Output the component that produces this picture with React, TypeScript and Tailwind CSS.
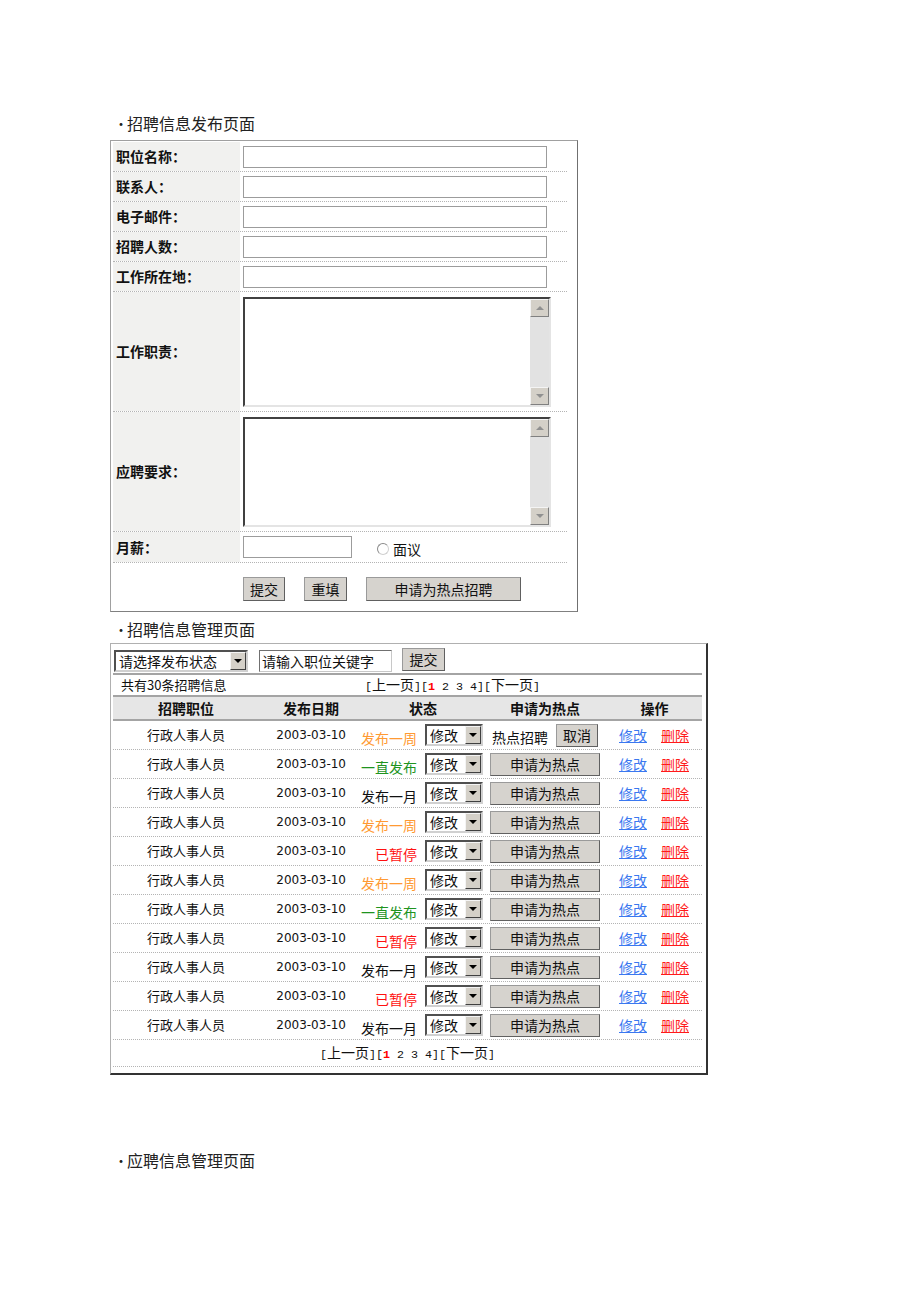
import React from 'react';

const Heading = ({ children }: { children: React.ReactNode }) => (
  <div className="h-[20px] leading-[20px] flex items-center text-[16px] text-[#222]">
    <span className="w-[17px] pl-[4px] text-[14px]">•</span>
    <span>{children}</span>
  </div>
);

const Btn = ({ children, className }: { children: React.ReactNode; className: string }) => (
  <div
    className={`flex items-center justify-center bg-[#d6d3ce] border border-[#9a9a9a] border-r-[#606060] border-b-[#606060] text-[14px] text-[#111] ${className}`}
  >
    {children}
  </div>
);

const Select = ({ text, className }: { text: string; className: string }) => (
  <div
    className={`h-[22px] flex bg-white border-2 border-t-[#505050] border-l-[#505050] border-r-[#d0d0d0] border-b-[#d0d0d0] ${className}`}
  >
    <div className="flex-1 flex items-center pl-[3px] text-[14px] leading-[18px] whitespace-nowrap">{text}</div>
    <div className="w-[16px] bg-[#d4d0c8] border border-t-[#f4f4f4] border-l-[#f4f4f4] border-r-[#404040] border-b-[#404040] flex items-center justify-center">
      <div className="w-0 h-0 border-l-[4px] border-r-[4px] border-t-[4px] border-l-transparent border-r-transparent border-t-black" />
    </div>
  </div>
);

const ScrollBtn = ({ up }: { up?: boolean }) => (
  <div className="h-[18px] bg-[#d4d0c8] border border-t-[#f4f4f4] border-l-[#f4f4f4] border-r-[#808080] border-b-[#808080] flex items-center justify-center">
    {up ? (
      <div className="w-0 h-0 border-l-[4px] border-r-[4px] border-b-[4px] border-l-transparent border-r-transparent border-b-[#909090]" />
    ) : (
      <div className="w-0 h-0 border-l-[4px] border-r-[4px] border-t-[4px] border-l-transparent border-r-transparent border-t-[#909090]" />
    )}
  </div>
);

const TextArea = () => (
  <div className="w-[308px] h-[110px] flex bg-white border-2 border-t-[#404040] border-l-[#404040] border-r-[#e4e4e4] border-b-[#e4e4e4]">
    <div className="flex-1" />
    <div className="w-[19px] flex flex-col bg-[#e2e2e2]">
      <ScrollBtn up />
      <div className="flex-1" />
      <ScrollBtn />
    </div>
  </div>
);

const Field = ({ w }: { w: string }) => <div className={`h-[22px] bg-white border border-[#9c9c9c] ${w}`} />;

const FormRow = ({ label, h, children }: { label: string; h: string; children: React.ReactNode }) => (
  <div className={`flex border-b border-dotted border-[#b4b4b4] ${h}`}>
    <div className="w-[127px] shrink-0 bg-[#f1f1ef] flex items-center pl-[3px] text-[14px] font-bold">{label}</div>
    <div className="flex items-center pl-[3px]">{children}</div>
  </div>
);

const Mono = ({ children }: { children: React.ReactNode }) => (
  <span className="font-['Liberation_Mono',monospace] text-[11.67px]">{children}</span>
);

const Pager = () => (
  <span className="text-[14px] whitespace-nowrap">
    <Mono>[</Mono>上一页<Mono>][</Mono>
    <span className="font-['Liberation_Mono',monospace] text-[11.67px] font-bold text-[#ff0000]">1</span>
    <Mono> 2 3 4][</Mono>下一页<Mono>]</Mono>
  </span>
);

type Status = { text: string; color: string };
const S1: Status = { text: '发布一周', color: 'text-[#ff9a33]' };
const S2: Status = { text: '一直发布', color: 'text-[#1f941f]' };
const S3: Status = { text: '发布一月', color: 'text-[#111]' };
const S4: Status = { text: '已暂停', color: 'text-[#ff1010]' };

const rows: Status[] = [S1, S2, S3, S1, S4, S1, S2, S4, S3, S4, S3];

const PublishForm = () => (
  <div className="w-[468px] h-[472px] border border-[#a0a0a0] border-r-[#707070] border-b-[#808080] pt-[1px] pl-[2px]">
    <div className="w-[454px]">
      <FormRow label="职位名称：" h="h-[30px]"><Field w="w-[304px]" /></FormRow>
      <FormRow label="联系人：" h="h-[30px]"><Field w="w-[304px]" /></FormRow>
      <FormRow label="电子邮件：" h="h-[30px]"><Field w="w-[304px]" /></FormRow>
      <FormRow label="招聘人数：" h="h-[30px]"><Field w="w-[304px]" /></FormRow>
      <FormRow label="工作所在地：" h="h-[30px]"><Field w="w-[304px]" /></FormRow>
      <FormRow label="工作职责：" h="h-[120px]"><TextArea /></FormRow>
      <FormRow label="应聘要求：" h="h-[120px]"><TextArea /></FormRow>
      <FormRow label="月薪：" h="h-[31px]">
        <Field w="w-[109px]" />
        <div className="ml-[25px] mt-[3px] w-[12px] h-[12px] rounded-full bg-white border border-[#8a8a8a] border-r-[#d0d0d0] border-b-[#d0d0d0]" />
        <span className="ml-[4px] mt-[5px] text-[14px]">面议</span>
      </FormRow>
      <div className="h-[46px] flex items-center pl-[130px] pt-[6px]">
        <Btn className="w-[42px] h-[24px]">提交</Btn>
        <Btn className="ml-[19px] w-[43px] h-[24px]">重填</Btn>
        <Btn className="ml-[19px] w-[155px] h-[24px]">申请为热点招聘</Btn>
      </div>
    </div>
  </div>
);

const ManageTable = () => (
  <div className="w-[598px] h-[432px] border border-t-[#b0b0b0] border-l-[#b0b0b0] border-r-2 border-b-2 border-r-[#333] border-b-[#333] pl-[2px]">
    <div className="w-[589px] text-[13px]">
      <div className="h-[31px] flex items-start border-b-2 border-[#a4a4a4] pl-[1px]">
        <Select text="请选择发布状态" className="mt-[6px] w-[134px]" />
        <div className="mt-[6px] ml-[11px] w-[133px] h-[22px] flex items-center bg-white border border-t-[#707070] border-l-[#707070] border-r-[#c8c8c8] border-b-[#c8c8c8] pl-[2px] text-[14px] leading-[18px] whitespace-nowrap">
          请输入职位关键字
        </div>
        <Btn className="mt-[4px] ml-[10px] w-[43px] h-[23px]">提交</Btn>
      </div>
      <div className="h-[22px] flex items-center border-b-2 border-[#a4a4a4]">
        <div className="w-[252px] pl-[8px]">共有30条招聘信息</div>
        <Pager />
      </div>
      <div className="h-[24px] flex items-center bg-[#e6e6e6] border-b-2 border-[#a4a4a4] text-[14px] font-bold">
        <div className="w-[146px] text-center">招聘职位</div>
        <div className="w-[104px] text-center">发布日期</div>
        <div className="w-[120px] text-center">状态</div>
        <div className="w-[124px] text-center">申请为热点</div>
        <div className="w-[95px] text-center">操作</div>
      </div>
      {rows.map((s, i) => (
        <div key={i} className="h-[29px] flex items-center border-b border-dotted border-[#b4b4b4]">
          <div className="w-[146px] text-center">行政人事人员</div>
          <div className="w-[96px] text-right pr-[9px] font-['DejaVu_Sans',sans-serif] text-[12px]">2003-03-10</div>
          <div className="w-[130px] flex items-center justify-end pr-[2px]">
            <span className={`text-[14px] translate-y-[3px] whitespace-nowrap ${s.color}`}>{s.text}</span>
            <Select text="修改" className="ml-[8px] w-[58px]" />
          </div>
          <div className="w-[122px] flex items-center pl-[5px]">
            {i === 0 ? (
              <>
                <span className="ml-[2px] text-[14px] translate-y-[2px]">热点招聘</span>
                <Btn className="ml-[8px] w-[42px] h-[23px]">取消</Btn>
              </>
            ) : (
              <Btn className="w-[110px] h-[23px]">申请为热点</Btn>
            )}
          </div>
          <div className="w-[95px] flex items-center pl-[12px] text-[14px]">
            <span className="underline text-[#3a78f0]">修改</span>
            <span className="ml-[14px] underline text-[#ff1a1a]">删除</span>
          </div>
        </div>
      ))}
      <div className="h-[27px] flex items-center justify-center border-b border-dotted border-[#b4b4b4]">
        <Pager />
      </div>
    </div>
  </div>
);

export default function App() {
  return (
    <div className="w-[920px] h-[1302px] bg-white text-[#111] font-['Noto_Sans_CJK_SC','Noto_Sans',sans-serif]">
      <div className="pl-[110px] pt-[113px]">
        <div className="mb-[7px]">
          <Heading>招聘信息发布页面</Heading>
        </div>
        <PublishForm />
        <div className="mt-[7px] mb-[4px]">
          <Heading>招聘信息管理页面</Heading>
        </div>
        <ManageTable />
        <div className="mt-[75px]">
          <Heading>应聘信息管理页面</Heading>
        </div>
      </div>
    </div>
  );
}
